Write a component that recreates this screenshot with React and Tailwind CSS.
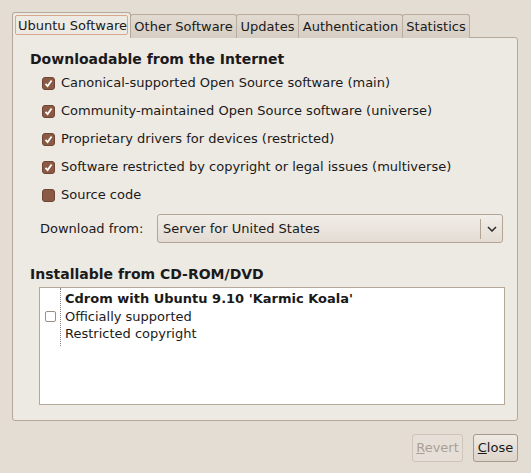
import React from "react";

const Check = ({ checked }) => (
  <span className="w-[13px] h-[13px] rounded-[3px] bg-[#8b5a44] border border-[#6e4534] flex items-center justify-center shrink-0">
    {checked && (
      <svg width="9" height="9" viewBox="0 0 9 9">
        <path d="M1.5 4.8 L3.6 7 L7.6 1.4" stroke="#fff" strokeWidth="1.8" fill="none" />
      </svg>
    )}
  </span>
);

const sources = [
  ["Canonical-supported Open Source software (main)", true],
  ["Community-maintained Open Source software (universe)", true],
  ["Proprietary drivers for devices (restricted)", true],
  ["Software restricted by copyright or legal issues (multiverse)", true],
  ["Source code", false],
];

const tabs = [
  ["Other Software", "w-[107px]"],
  ["Updates", "w-[63px]"],
  ["Authentication", "w-[105px]"],
  ["Statistics", "w-[68px]"],
];

const App = () => {
  return (
    <div
      className="w-[531px] h-[473px] bg-[#e4ddd4] text-[13px] text-[#1a1a1a] pt-[12px] px-[12px]"
      style={{ fontFamily: '"DejaVu Sans", sans-serif' }}
    >
      {/* tabs */}
      <div className="flex items-end h-[26px] whitespace-nowrap">
        <div className="h-[26px] w-[119px] bg-[#ede9e3] border border-b-0 border-[#b5a898] rounded-t-[3px] px-[2px] pt-[2px] relative z-10">
          <div className="h-[20px] border border-[#d8a88e] rounded-[2px] flex items-center px-[2px] leading-none">
            Ubuntu Software
          </div>
        </div>
        {tabs.map(([t, w]) => (
          <div
            key={t}
            className={`${w} h-[24px] px-[3px] bg-gradient-to-b from-[#e2dbd2] to-[#d6cdc3] border border-b-0 border-[#b9ad9f] -ml-px rounded-t-[3px] flex items-center justify-center leading-none`}
          >
            {t}
          </div>
        ))}
      </div>

      {/* panel */}
      <div className="-mt-px w-[506px] h-[384px] bg-[#ede9e3] border border-[#b5a898] rounded-b-[3px] rounded-tr-[3px] pl-[17px] pr-[14px] pt-[11px]">
        <div className="font-bold text-[14px] leading-[20px]">Downloadable from the Internet</div>
        <div className="pl-[12px]">
          {sources.map(([s, c]) => (
            <div key={s} className="flex items-center gap-[6px] h-[28px]">
              <Check checked={c} />
              <span>{s}</span>
            </div>
          ))}
        </div>

        <div className="flex items-center mt-[5px] pl-[10px]">
          <span className="w-[117px]">Download from:</span>
          <div className="w-[346px] h-[29px] rounded-[3px] border border-[#b3a595] bg-gradient-to-b from-[#f1ede8] to-[#e4dcd3] flex items-center">
            <span className="flex-1 pl-[5px]">Server for United States</span>
            <span className="w-px h-[20px] bg-[#b3a595]"></span>
            <span className="w-[21px] flex justify-center">
              <svg width="10" height="6" viewBox="0 0 10 6">
                <path d="M1 1 L5 5 L9 1" stroke="#2a2a2a" strokeWidth="1.5" fill="none" />
              </svg>
            </span>
          </div>
        </div>

        <div className="font-bold text-[14px] leading-[20px] mt-[21px]">Installable from CD-ROM/DVD</div>
        <div className="mt-[3px] ml-[9px] w-[466px] h-[118px] bg-white border border-[#b5a898] flex">
          <div className="w-[20px] flex items-center justify-end pr-[4px] h-[56px]">
            <span className="w-[11px] h-[11px] border border-[#9a8f84] rounded-[2px] bg-white"></span>
          </div>
          <div className="border-l border-dotted border-[#888] h-[58px] pl-[4px] pt-[2px] leading-[17.5px]">
            <div className="font-bold">Cdrom with Ubuntu 9.10 'Karmic Koala'</div>
            <div>Officially supported</div>
            <div>Restricted copyright</div>
          </div>
        </div>
      </div>

      {/* buttons */}
      <div className="flex justify-end gap-[10px] mt-[13px] pr-[1px]">
        <button className="w-[51px] h-[28px] border border-[#cfc5ba] rounded-[3px] text-[#a99f95] bg-[#e6dfd7]">
          <span className="underline">R</span>evert
        </button>
        <button className="w-[45px] h-[28px] border border-[#a89a8b] rounded-[3px] bg-gradient-to-b from-[#efeae4] to-[#ddd4ca]">
          <span className="underline">C</span>lose
        </button>
      </div>
    </div>
  );
};

export default App;
